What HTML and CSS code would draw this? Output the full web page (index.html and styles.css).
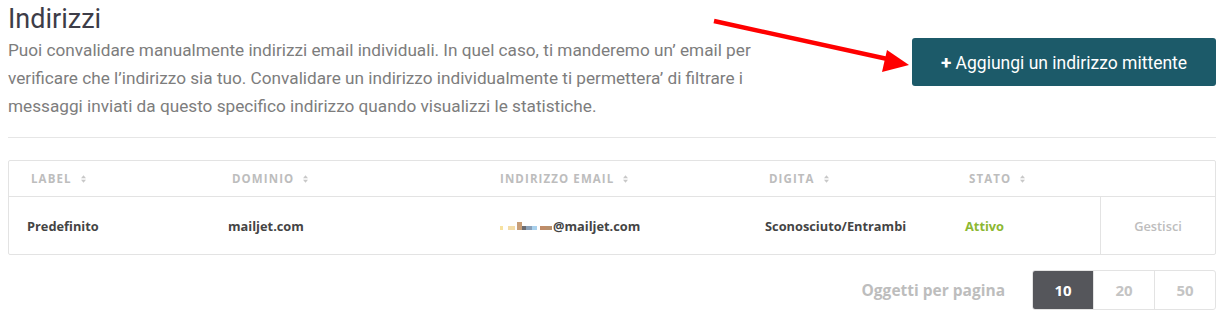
FILE: index.html
```html
<!DOCTYPE html>
<html lang="it">
<head>
<meta charset="utf-8">
<title>Indirizzi</title>
<link rel="stylesheet" href="styles.css">
</head>
<body>
<div class="page">
  <section class="top">
    <div class="intro">
      <h1 class="title">Indirizzi</h1>
      <p class="desc">Puoi convalidare manualmente indirizzi email individuali. In quel caso, ti manderemo un’ email per verificare che l’indirizzo sia tuo. Convalidare un indirizzo individualmente ti permettera’ di filtrare i messaggi inviati da questo specifico indirizzo quando visualizzi le statistiche.</p>
    </div>
    <button class="add-btn"><span class="plus">+</span> Aggiungi un indirizzo mittente</button>
  </section>
  <hr class="divider">
  <div class="table">
    <div class="row head">
      <div class="cell">LABEL <svg class="sort" viewBox="0 0 6 9"><path d="M3 0 L6 3.5 H0 Z M0 5.5 H6 L3 9 Z"/></svg></div>
      <div class="cell">DOMINIO <svg class="sort" viewBox="0 0 6 9"><path d="M3 0 L6 3.5 H0 Z M0 5.5 H6 L3 9 Z"/></svg></div>
      <div class="cell">INDIRIZZO EMAIL <svg class="sort" viewBox="0 0 6 9"><path d="M3 0 L6 3.5 H0 Z M0 5.5 H6 L3 9 Z"/></svg></div>
      <div class="cell">DIGITA <svg class="sort" viewBox="0 0 6 9"><path d="M3 0 L6 3.5 H0 Z M0 5.5 H6 L3 9 Z"/></svg></div>
      <div class="cell">STATO <svg class="sort" viewBox="0 0 6 9"><path d="M3 0 L6 3.5 H0 Z M0 5.5 H6 L3 9 Z"/></svg></div>
      <div class="cell"></div>
    </div>
    <div class="row body">
      <div class="cell">Predefinito</div>
      <div class="cell">mailjet.com</div>
      <div class="cell email"><span class="pix"><i class="p1"></i><i class="p2"></i><i class="p3"></i><i class="p4"></i><i class="p5"></i><i class="p6"></i><i class="p7"></i><i class="p8"></i></span>@mailjet.com</div>
      <div class="cell">Sconosciuto/Entrambi</div>
      <div class="cell status">Attivo</div>
      <div class="cell manage">Gestisci</div>
    </div>
  </div>
  <div class="pager">
    <span class="pager-label">Oggetti per pagina</span>
    <div class="pager-btns">
      <span class="pbtn active">10</span>
      <span class="pbtn">20</span>
      <span class="pbtn">50</span>
    </div>
  </div>
</div>
<svg class="arrow" viewBox="0 0 1222 318" width="1222" height="318">
  <line x1="714" y1="21" x2="892" y2="60" stroke="#f00" stroke-width="4.5"/>
  <polygon points="909,65 887,50 882,72" fill="#f00"/>
</svg>
</body>
</html>
```

FILE: styles.css
```css
html, body {
  margin: 0;
  padding: 0;
  background: #fff;
}
.page {
  padding: 0 6px 0 8px;
  font-family: Roboto, "Liberation Sans", sans-serif;
}
.top {
  display: flex;
  justify-content: space-between;
  align-items: flex-start;
}
.intro {
  width: 765px;
}
.title {
  margin: 0;
  padding-top: 2px;
  font-size: 27px;
  line-height: 34px;
  font-weight: 400;
  color: #3d3d48;
}
.desc {
  margin: 0;
  font-size: 17.2px;
  line-height: 28px;
  color: #7d7d7d;
}
.add-btn {
  margin-top: 38px;
  width: 304px;
  height: 48px;
  border: none;
  border-radius: 3px;
  background: #1c5a69;
  color: #fff;
  font-family: Roboto, "Liberation Sans", sans-serif;
  font-size: 17.5px;
  padding: 0;
  margin-right: 0;
}
.plus {
  font-weight: 700;
  font-size: 19px;
}
.divider {
  margin: 17px 0 0 0;
  border: none;
  border-top: 1px solid #e6e6e6;
  height: 0;
}
.table {
  margin-top: 22px;
  border: 1px solid #e3e3e3;
  border-radius: 2px;
  width: 1206px;
  font-family: "Open Sans", "DejaVu Sans", sans-serif;
}
.row {
  display: grid;
  grid-template-columns: 201px 268px 269px 200px 153px 1fr;
  align-items: stretch;
}
.row.head {
  height: 35px;
  border-bottom: 1px solid #e3e3e3;
}
.head .cell {
  display: flex;
  align-items: center;
  gap: 9px;
  padding-left: 22px;
  font-size: 11.5px;
  font-weight: 700;
  letter-spacing: 1.1px;
  color: #bdbdbd;
}
.sort {
  width: 5px;
  height: 8px;
  fill: #c8c8c8;
}
.row.body {
  height: 57px;
}
.body .cell {
  display: flex;
  align-items: center;
  padding-left: 18px;
  font-size: 12.8px;
  font-weight: 700;
  color: #444;
}
.body .cell.email {
  padding-left: 22px;
}
.pix {
  display: inline-flex;
  align-items: flex-end;
  margin-right: 1px;
}
.pix i {
  display: inline-block;
  height: 4px;
}
.pix .p1 { width: 3px; background: #f7e2a0; margin-right: 5px; }
.pix .p2 { width: 7px; background: #f3dca8; margin-right: 2px; }
.pix .p3 { width: 5px; background: #c89e78; height: 8px; }
.pix .p4 { width: 4px; background: #6b6b70; }
.pix .p5 { width: 6px; background: #8aa0b8; }
.pix .p6 { width: 5px; background: #a8d0ec; margin-right: 3px; }
.pix .p7 { width: 6px; background: #c08c68; }
.pix .p8 { width: 6px; background: #b8906c; }
.body .cell.status {
  color: #8cb832;
}
.body .cell.manage {
  justify-content: center;
  padding-left: 0;
  border-left: 1px solid #e3e3e3;
  color: #bdbdbd;
  font-weight: 600;
}
.pager {
  display: flex;
  justify-content: flex-end;
  align-items: center;
  gap: 27px;
  margin-top: 15px;
  font-family: "Open Sans", "DejaVu Sans", sans-serif;
}
.pager-label {
  font-size: 15.5px;
  font-weight: 700;
  color: #bdbdbd;
}
.pager-btns {
  display: flex;
  border: 1px solid #e3e3e3;
  border-radius: 3px;
  overflow: hidden;
}
.pbtn {
  width: 60px;
  height: 38px;
  display: flex;
  align-items: center;
  justify-content: center;
  font-size: 15px;
  font-weight: 700;
  color: #c4c4c4;
  border-left: 1px solid #e3e3e3;
}
.pbtn:first-child {
  border-left: none;
}
.pbtn.active {
  background: #55565b;
  color: #fff;
}
.arrow {
  position: absolute;
  left: 0;
  top: 0;
  pointer-events: none;
}
```
